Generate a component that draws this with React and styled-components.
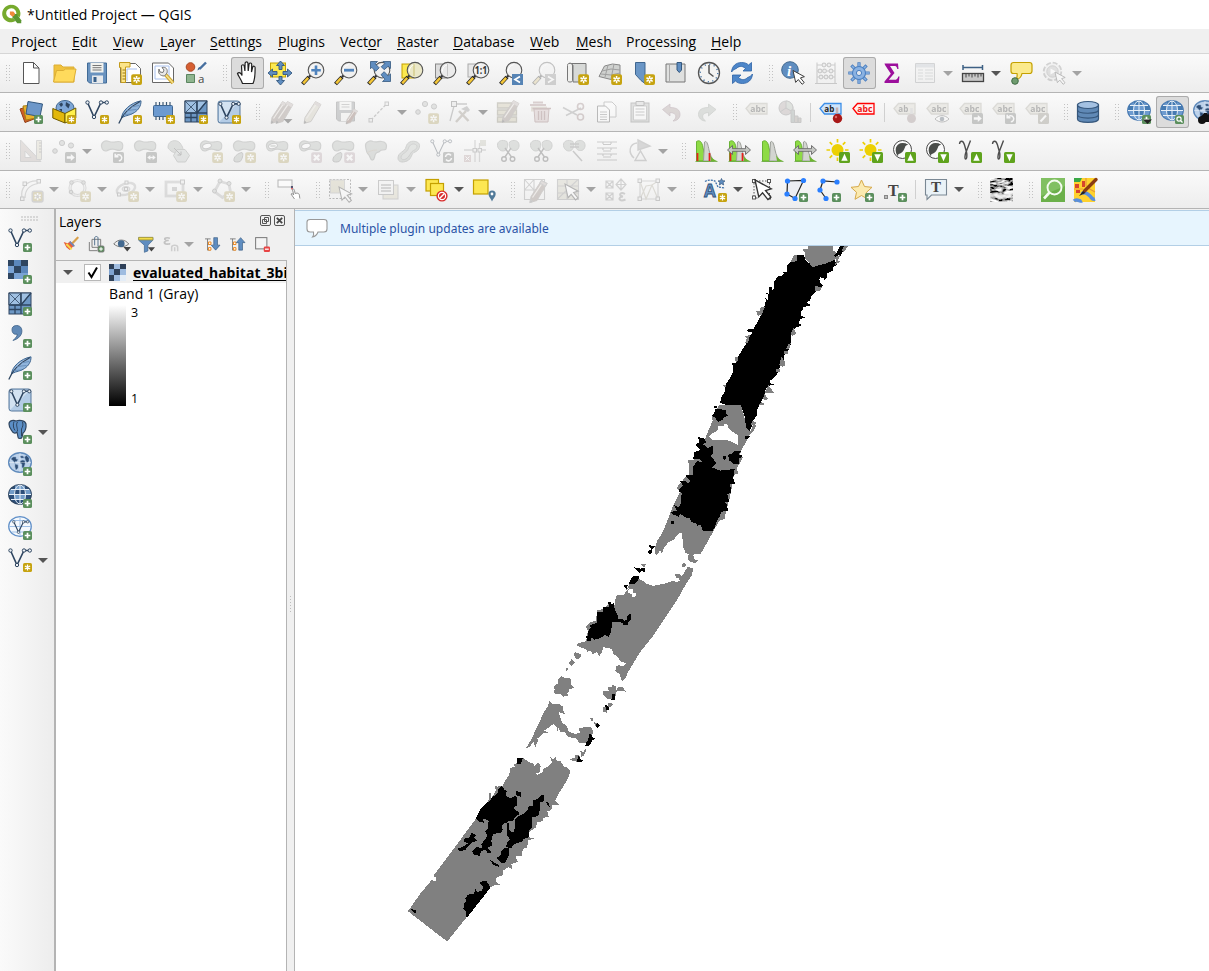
import React from "react";
import styled, { createGlobalStyle } from "styled-components";

const Global = createGlobalStyle`
  * { box-sizing: border-box; }
  html, body { margin: 0; background: #f0f0f0; overflow: hidden; }
`;

const Window = styled.div`
  width: 1209px;
  height: 971px;
  display: flex;
  flex-direction: column;
  overflow: hidden;
  background: #f0f0f0;
  color: #000;
  font-family: "Open Sans", "Noto Sans", sans-serif;
`;

const TitleBar = styled.header`
  height: 29px;
  flex: none;
  display: flex;
  align-items: center;
  gap: 4px;
  padding-left: 2px;
  background: #fff;
  font-size: 14px;
  letter-spacing: 0.05px;
  white-space: nowrap;
`;

const MenuBar = styled.nav`
  height: 25px;
  flex: none;
  display: flex;
  align-items: center;
  padding: 2px 0 0 11px;
  border-bottom: 1px solid #d6d6d6;
`;

const MenuItem = styled.span`
  width: ${(p) => p.$w}px;
  flex: none;
  font-size: 14px;
  line-height: 22px;
  letter-spacing: 0;
  white-space: nowrap;
  u { text-underline-offset: 2px; text-decoration-thickness: 1px; text-decoration-skip-ink: none; }
`;

const Toolbar = styled.div`
  height: ${(p) => p.$h ?? 39}px;
  flex: none;
  display: flex;
  align-items: center;
  overflow: hidden;
  background: linear-gradient(#fafafa, #ededed);
  border-bottom: 1px solid #b4b4b4;
`;

const Grip = styled.div`
  width: ${(p) => (p.$first ? 15 : 18)}px;
  height: 18px;
  flex: none;
  padding-left: ${(p) => (p.$first ? 6 : 10)}px;
  &::before {
    content: "";
    display: block;
    width: 5px;
    height: 18px;
    background:
      repeating-linear-gradient(#f4f4f4 0 1px, transparent 1px 3px),
      linear-gradient(90deg, #c2c2c2 1px, transparent 1px 3px, #c2c2c2 3px 4px, transparent 4px);
    mask: repeating-linear-gradient(transparent 0 1px, #000 1px 2px, transparent 2px 3px);
  }
`;

const Separator = styled.div`
  width: 8px;
  height: 19px;
  flex: none;
  border-left: 1px solid #d0d0d0;
  transform: translateX(3px);
`;

const ToolButton = styled.button`
  width: 33px;
  height: 32px;
  flex: none;
  display: flex;
  align-items: center;
  justify-content: flex-start;
  padding: 0 0 0 4px;
  border: 0;
  background: ${(p) =>
    p.$active ? "linear-gradient(#dcdcdc, #dcdcdc) 0 0 / 32px 32px no-repeat" : "none"};
  box-shadow: ${(p) => (p.$active ? "inset 0 0 0 1px #ababab" : "none")};
  border-radius: 3px;
`;

const Glyph = styled.svg`
  width: ${(p) => p.$size ?? 24}px;
  height: ${(p) => p.$size ?? 24}px;
  flex: none;
  display: block;
  overflow: visible;
  filter: ${(p) => (p.$dim ? "saturate(0.45) opacity(0.33)" : "none")};
  font-family: "Open Sans", sans-serif;
`;

const Caret = styled.span`
  width: 15px;
  flex: none;
  display: flex;
  padding-left: 1px;
  &::before {
    content: "";
    border: 5px solid transparent;
    border-top-color: ${(p) => (p.$dim ? "#a3a3a3" : "#555")};
    border-bottom: 0;
  }
`;

const Workspace = styled.main`
  flex: 1;
  min-height: 0;
  display: flex;
`;

const SideBar = styled.aside`
  width: 54px;
  flex: none;
  display: flex;
  flex-direction: column;
  padding-top: 7px;
  background: linear-gradient(90deg, #fafafa, #ededed);
`;

const SideGrip = styled.div`
  width: 17px;
  height: 5px;
  margin-left: 21px;
  background: radial-gradient(circle at 1px 1px, #b9b9b9 0.5px, transparent 0.9px) 0 0 / 3px 3px;
`;

const SideItem = styled.div`
  height: 32px;
  display: flex;
  align-items: center;
  padding-left: 8px;
  gap: 5px;
`;

const SideList = styled.div`
  padding-top: 3px;
`;

const LayersDock = styled.section`
  width: 233px;
  flex: none;
  display: flex;
  flex-direction: column;
  border-left: 2px solid #b4b4b4;
`;

const DockTitle = styled.div`
  height: 22px;
  flex: none;
  display: flex;
  align-items: center;
  padding: 0 2px 0 3px;
  font-size: 14px;
  letter-spacing: 0;
  span { flex: 1; padding-top: 2px; }
`;

const DockButton = styled(Glyph)`
  margin-left: 3px;
`;

const DockTools = styled.div`
  height: 29px;
  flex: none;
  display: flex;
  align-items: center;
  padding: 0 0 3px 7px;
`;

const DockTool = styled.div`
  width: ${(p) => p.$w ?? 25}px;
  flex: none;
`;

const LayerTree = styled.div`
  flex: 1;
  width: 231px;
  background: #fff;
  border-top: 1px solid #b4b4b4;
  border-right: 1px solid #b4b4b4;
`;

const LayerRow = styled.div`
  height: 22px;
  display: flex;
  align-items: center;
  background: #f0f0f0;
  overflow: hidden;
  padding-left: 6px;
`;

const CheckBox = styled.span`
  width: 17px;
  height: 17px;
  flex: none;
  margin: 0 8px 0 7px;
  background: #fff;
  border: 1px solid #b8b8b8;
`;

const LayerName = styled.span`
  margin-left: 7px;
  font-family: "Noto Sans", sans-serif;
  font-weight: 700;
  font-size: 14px;
  letter-spacing: 0.08px;
  white-space: nowrap;
  text-decoration: underline;
  text-underline-offset: 2px;
  text-decoration-thickness: 1px;
  text-decoration-skip-ink: none;
`;

const BandLabel = styled.div`
  height: 22px;
  padding-left: 53px;
  line-height: 21px;
  font-size: 14px;
  letter-spacing: 0.1px;
`;

const Legend = styled.div`
  display: flex;
  gap: 5px;
  padding-left: 53px;
`;

const Ramp = styled.div`
  width: 17px;
  height: 101px;
  background: linear-gradient(#fff, #000);
`;

const RampLabels = styled.div`
  height: 101px;
  display: flex;
  flex-direction: column;
  justify-content: space-between;
  font-size: 12.5px;
  line-height: 15px;
`;

const Splitter = styled.div`
  width: 8px;
  flex: none;
  display: flex;
  align-items: center;
  justify-content: center;
  border-right: 1px solid #b4b4b4;
  &::before {
    content: "";
    width: 2px;
    height: 18px;
    margin-top: 30px;
    background: linear-gradient(#bdbdbd 1px, transparent 1px) 0 0 / 1px 3px no-repeat repeat;
    background-repeat: repeat-y;
  }
`;

const CanvasPane = styled.section`
  flex: 1;
  min-width: 0;
  display: flex;
  flex-direction: column;
  padding-top: 1px;
`;

const MessageBar = styled.div`
  height: 36px;
  flex: none;
  display: flex;
  align-items: center;
  gap: 12px;
  padding-left: 11px;
  background: #e7f5fe;
  border: 1px solid #b3cfe6;
  border-right: 0;
  border-left: 0;
  color: #2a52a5;
  font-family: "Noto Sans", sans-serif;
  font-size: 12px;
  letter-spacing: 0.02px;
`;

const MapCanvas = styled.svg`
  width: 914px;
  height: 725px;
  display: block;
  background: #fff;
`;

/* ---------- icon parts ---------- */
const B = "#6d97c4";
const N = "#2e4560";

const Badge = ({ c, big, children }) => (
  <g transform={big ? "translate(24 24) scale(1.2) translate(-24 -24)" : undefined}>
    <rect x="15" y="15" width="9" height="9" rx="1.6" fill={c} />
    {children}
  </g>
);
const Plus = () => (
  <Badge c="#5b8f5d"><path d="M19.5 16.7v5.6M16.7 19.5h5.6" stroke="#fff" strokeWidth="1.7" /></Badge>
);
const Star = ({ big }) => (
  <Badge c="#c6a310" big={big}>
    <path d="M19.5 16.4v6.2M16.9 18l5.2 3M22.1 18l-5.2 3" stroke="#fff" strokeWidth="1.3" />
    {big && <circle cx="19.5" cy="19.5" r=".8" fill="#c6a310" />}
  </Badge>
);
const Cross = () => (
  <Badge c="#c79aa8" big><path d="M17.3 17.3l4.4 4.4M21.7 17.3l-4.4 4.4" stroke="#fff" strokeWidth="1.9" /></Badge>
);
const GoBadge = () => (
  <g><rect x="13" y="13" width="11" height="11" rx="1.500" fill="#6b706b" /><path d="M14.800 17.200h4v-2.200l4 3.500-4 3.500v-2.200h-4z" fill="#fff" /></g>
);
const TurnBadge = () => (
  <g><rect x="13" y="13" width="11" height="11" rx="1.500" fill="#6b706b" /><path d="M16.200 17.200a3 3 0 1 1 2.600 4.600M15.200 14.800v3h3.200" stroke="#fff" strokeWidth="1.500" fill="none" /></g>
);
const UpDown = ({ up }) => (
  <g>
    <rect x="13" y="13" width="11" height="11" rx="1.500" fill="#5fa31d" />
    <path d={up ? "M18.500 14.800l3.200 7h-6.400z" : "M18.500 22.200l3.200-7h-6.400z"} fill="#fff" />
  </g>
);
const Lens = ({ fill = "#f0f0f0", stroke = "#555", children }) => (
  <g>
    <path d="M9.500 14.500L8 16" stroke="#333" strokeWidth="2.400" />
    <path d="M8 16l-6.500 7" stroke="#222" strokeWidth="4" />
    <path d="M7.200 16.900L2.200 22.400" stroke="#f5c738" strokeWidth="2.500" />
    <circle cx="15" cy="9.200" r="7.800" fill={fill} stroke={stroke} strokeWidth="1.100" />
    <path d="M9.500 10.500a6 6 0 0 1 5-6.800" stroke="#fff" fill="none" />
    {children}
  </g>
);
const VNodes = ({ w = 1.3 }) => (
  <g fill="#eef2f6" stroke={N} strokeWidth={w}>
    <path d="M2.500 2.500L9 17l7-14.500h5.500" fill="none" strokeWidth={w + 0.3} />
    <circle cx="2.500" cy="2.500" r="1.700" strokeWidth="1" />
    <circle cx="9" cy="17" r="1.700" strokeWidth="1" />
    <circle cx="16" cy="2.500" r="1.700" strokeWidth="1" />
    <circle cx="21.800" cy="2.500" r="1.700" strokeWidth="1" />
  </g>
);
const Feather = () => (
  <g>
    <path d="M3.500 18C4 11 12 3 23 .8c.2 5-2.500 9-6.500 11.700S8 15.500 5 17z" fill="#8fb4dc" stroke="#3f6690" />
    <path d="M6 14C9 8 15 4 21 2.500c-4 3-10 7-15 11.500z" fill="#c3d8ee" />
    <path d="M.8 23.500C4 15 10 8 22 1.500" stroke={N} strokeWidth="1.200" fill="none" />
    <path d="M9 10.500l9.500-1M6 14.500l8-.5M13 7l8-1.500" stroke="#5f87b3" strokeWidth=".8" />
  </g>
);
const MeshSquare = () => (
  <g stroke={N} strokeWidth="1">
    <rect x="1" y="1" width="22" height="21" fill={B} />
    <path d="M1 1h12v12H1z" fill="#9fc0e2" />
    <path d="M13 1h10L13 13z" fill="#9fc0e2" />
    <path d="M1 1l12 12M13 1L1 13" fill="none" strokeWidth=".8" />
    <path d="M13 13L23 1M1 13h22M13 1v21M7 13v9M1 17.500h12" fill="none" strokeWidth="1.300" />
  </g>
);
const Globe = ({ dark }) => (
  <g>
    <ellipse cx="12" cy="10.500" rx="11.300" ry="9.800" fill={dark ? "#2c4f7a" : "#6d9bcf"} stroke={dark ? N : "#4d7db3"} strokeWidth="1.200" />
    <path d="M2 5.500h4.500v5H1zM17.500 5.500H22l1 5h-5.500zM6.500 10.500h11v5h-11zM7 1.500h10v4H7z" fill={dark ? "#7fa9d6" : "#3f75ad"} opacity=".85" />
    <path d="M12 1v19M1 10.500h22M3 5.500h18M3 15.500h18" stroke="#e8f0f8" strokeWidth="1" />
    <ellipse cx="12" cy="10.500" rx="5.500" ry="9.500" fill="none" stroke="#e8f0f8" />
  </g>
);
const WorldMap = () => (
  <g>
    <ellipse cx="12" cy="10.500" rx="11.300" ry="9.800" fill="#bdd2ea" stroke="#5f8abb" strokeWidth="1.400" />
    <path d="M3 7l2-2h3v2l2 .5-1.500 2H7v2L5.500 9zM7 12l3 1v3l-2 2-1-3zM12 4h3l1 2h-3zM12 9l3-1 2 1v3l-1.500 4-1.500-.5V12l-2-1zM16.500 5l2-1.500L21 6v3l-2 2-1.500-3z" fill="#2f4e74" stroke="#7f9fc4" strokeWidth=".5" />
    <path d="M1 10.500h22M12 1v19" stroke="#fff" strokeWidth=".6" opacity=".6" />
  </g>
);
const Blob = ({ inner }) => (
  <g>
    <path d="M1.500 7.500C1 3 5 1 9 2.500c3.500 1.300 5 .5 9 0 4-.3 5.500 2.500 4.500 6.500-1 3.500-4 2.500-7.500 1.500-4-1-5.500 0-8 1.200C4.500 12.700 2 11 1.500 7.500z" fill="#a8b3a8" stroke="#858b85" strokeWidth="1.200" />
    {inner && <ellipse cx="8" cy="7" rx="4.500" ry="2.500" fill="#fff" stroke="#777" transform="rotate(-15 8 7)" />}
  </g>
);
const LowBlob = () => (
  <path d="M2 22c-1-4 4-8 8-8.500 2 1 0 8-2 9-2.500.8-5 .7-6-.5z" fill="#a8b3a8" stroke="#777" />
);
const Pencil = ({ c = "#9a7868" }) => (
  <g>
    <path d="M4 17.500L14.500 1.500l5.500 3L10 21.500 3 23.500z" fill={c} stroke="#8a7c70" strokeWidth=".9" />
    <path d="M5.500 18.500L16 3" stroke="#e8dccb" strokeWidth="1.300" />
    <path d="M14.500 1.500l5.500 3-1.700 2.700-5.500-3.100z" fill="#c0a8a0" />
    <path d="M3 23.500l.5-3 2.200 2z" fill="#444" />
  </g>
);
const Scissors = () => (
  <g fill="none" stroke="#555" strokeWidth="1.400">
    <path d="M9 9l6.500 9M15 9L9 18" />
    <circle cx="8" cy="20" r="2.300" /><circle cx="16.500" cy="20" r="2.300" />
  </g>
);
const LobePair = () => (
  <g fill="#a8b3a8" stroke="#858b85">
    <path d="M11 2.500C6 0 1 2 1.500 6.500S6 13 9 11.500s3-6 2-9zM13.500 3c4-3 9-1.500 9.500 2.500s-2 6.500-5.500 6-5-4.500-4-8.500z" />
  </g>
);
const Tag = ({ text = "abc", fill = "#d9d3b8", stroke = "#aaa48a", color = "#333" }) => (
  <g>
    <path d="M1 8.500L5.500 3.500H22v10.500H5.500z" fill={fill} stroke={stroke} strokeWidth="1.300" />
    <text x="5.300" y="12" fontSize="9.500" fontWeight="700" fill={color} textLength={text.length * 5} lengthAdjust="spacingAndGlyphs">{text}</text>
  </g>
);
const Histogram = ({ red, arrows }) => (
  <g>
    <path d="M2.500 22V2.500c3-2 5.500 0 6.500 6 1 5 2 9 5 13.500z" fill="#8edb45" stroke="#53a51b" strokeWidth=".8" />
    <path d="M9.500 22L10.500 3c2-2 3.500 2 4.500 8 1 5 3 8.500 5 11z" fill="#d3d5d1" stroke="#9b9e98" strokeWidth="1" />
    <path d="M16 16c1.500 3 4 5 7 6h-6z" fill="#6db52e" />
    {red && <path d="M3.500 14v8M15.500 14v8" stroke="#e8201c" strokeWidth="1.700" />}
    <path d="M1.500 22.500h22" stroke="#62a635" strokeWidth=".8" />
    {arrows && (
      <path d="M.5 11l5-4.500v3.200h13V6.500l5 4.500-5 4.500v-3.200h-13v3.200z" fill="#c6c8c4" stroke="#666" strokeWidth=".9" />
    )}
  </g>
);
const Sun = () => (
  <g>
    <circle cx="11.500" cy="11" r="6" fill="#ecd003" />
    <path d="M11.500 0v3.500M11.500 18.500V22M.5 11H4M19 11h3.500M3.700 3.200l2.500 2.500M19.300 3.200l-2.500 2.500M3.700 18.800l2.500-2.500" stroke="#ecd003" strokeWidth="1.700" />
  </g>
);
const Contrast = () => (
  <g>
    <circle cx="10.500" cy="10.500" r="9" fill="#fafafa" stroke="#4a4a4a" />
    <path d="M16.200 5.500C9 8.500 6.500 12 6 17.500A8 8 0 0 1 16.200 5.500z" fill="#4a4d4a" />
    <path d="M14 4.500c-1 6-3.500 10-9 11C1.500 10 5 1.500 14 4.500z" fill="#4a4d4a" />
  </g>
);
const Gamma = () => (
  <path d="M1.500 5C2 1.500 5 1 6.500 6l1.800 6.500L12.500 1.500M8.300 12C6.800 16 6.500 20 7.700 20s1.600-4 .6-8" fill="none" stroke="#4d4d4d" strokeWidth="1.400" />
);
const Cursor = ({ x = 11, y = 9, s = 1 }) => (
  <path transform={`translate(${x} ${y}) scale(${s})`} d="M0 0l2.800 12.500 2.800-3 4 5 2.200-1.800-4-4.900 4.200-1.300z" fill="#fff" stroke="#333" strokeWidth="1" />
);
const Nodes = ({ pts, close }) => (
  <g>
    <path d={"M" + pts.map((p) => p.join(" ")).join("L") + (close ? "z" : "")} fill={close ? "#ecedf2" : "none"} stroke="#222" strokeWidth="1.200" />
    {pts.map(([x, y]) => <circle key={x + "_" + y} cx={x} cy={y} r="2.600" fill="#2a7fff" />)}
  </g>
);
const Dot = ({ x, y, r = 2.3 }) => <circle cx={x} cy={y} r={r} fill="#b4b9b4" stroke="#777" />;
const DotCloud = () => <g><Dot x={3} y={12} /><Dot x={10} y={4} r={2.6} /><Dot x={19} y={6.5} r={2.6} /></g>;
const Sq = ({ x, y, s = 3.5 }) => <rect x={x} y={y} width={s} height={s} fill="#e4e4e4" stroke="#777" strokeWidth="1" />;

const icons = {
  file: <path d="M4.500 1.500h10l5.500 5.500v15.500H4.500zM14.500 1.500V7H20" fill="#fff" stroke="#555" />,
  folder: <g><path d="M2 4h7l2 2h11V21H2z" fill="#f0c23e" stroke="#dcae35" /><path d="M4.500 9.500h7l2-1.500H24L21.500 21H1.500z" fill="#ffda5c" stroke="#dcae35" /></g>,
  save: <g><path d="M2.500 2h19v20h-17L2.500 20z" fill="#6a93bf" stroke="#416b96" /><path d="M5.500 2h13v9.500h-13z" fill="#f2f2ee" /><path d="M7.500 4.500h9M7.500 6.700h9M7.500 9h9" stroke="#777" /><path d="M7 14.500h11V22H7z" fill="#e6e9ec" /><path d="M8.500 16h3v5h-3z" fill="#39608a" /></g>,
  layout: <g><path d="M2.500 2.500h15l5 5v14h-20z" fill="#fff" stroke="#666" /><path d="M9 8h10M9 8v12" stroke="#a8c0ee" fill="none" /><path d="M1.500 1.500H12v4.500H7.500v15.500H3V6.500H1.500z" fill="#fbe48a" stroke="#c39b1c" /><path d="M4.500 9h3M4.500 12h3M4.500 15h3M4.500 18h3" stroke="#9c7a14" /><Star big /></g>,
  layoutManager: <g><path d="M1.500 2h16l5 5v14.500h-21z" fill="#fff" stroke="#666" /><path d="M4 5h14v13H4z" fill="none" stroke="#a8c0ee" /><path d="M14 13l8 9" stroke="#caa22a" strokeWidth="3.600" /><path d="M14 13l8 9" stroke="#f7df86" strokeWidth="1.800" /><path d="M8 8l1 3 3 .5 1-2.500-2-2.500c4-1 6 2 5 5.500l-2.500 3C9 15 6.500 12 8 8z" fill="#e8e8e8" stroke="#777" /></g>,
  style: <g><circle cx="6.500" cy="6" r="4.300" fill="#d65f32" stroke="#a94a26" /><path d="M2.500 13.500h8v8h-8z" fill="#8fb58f" stroke="#5b8560" /><path d="M13.500 9.500c.2-3 2-4 3.500-3.500l-1 2z" fill="#3b6290" /><path d="M15.500 8L22 1.500" stroke="#466f9f" strokeWidth="2.400" fill="none" /><text x="14" y="21.500" fontSize="11.500" fill="#444">a</text></g>,
  hand: <path d="M7.500 22.500C6 18 3.500 15.500 2.500 12.500c1.500-1.800 3.500-.5 4.500 2L6.500 5c.5-1.800 2.500-1.500 2.700 0l.7 5 .2-8c.5-1.600 2.600-1.500 2.800 0l.3 8 .9-7c.5-1.500 2.500-1.200 2.600.3L16.500 11l1.200-5c.7-1.300 2.400-.9 2.400.6 0 6 .2 11-2.100 15.900z" fill="#fff" stroke="#222" strokeWidth="1.200" />,
  panSelection: <g><rect x="2.500" y="2" width="15" height="14" fill="#fce94f" stroke="#c4a000" /><path d="M12.500 0l4 4.500h-2.500v4h-3v-4H8.500zM12.500 24l-4-4.500H11v-4h3v4h2.500zM0 12l4.500-4v2.500H9v3H4.500V16zM24 12l-4.500 4v-2.500H15v-3h4.500V8z" fill="#5f8dc0" stroke="#33587f" strokeWidth=".9" /></g>,
  zoomIn: <Lens><path d="M15 4.500v9.500M10.300 9.200h9.500" stroke="#4f83bd" strokeWidth="2.600" /></Lens>,
  zoomOut: <Lens><path d="M10 9.200h10" stroke="#4f83bd" strokeWidth="2.800" /></Lens>,
  zoomFull: <g><Lens /><path d="M3.500.5h7L8.200 2.800l4 4-3.500 3.500-4-4-1.200 1.500zM23.500.5v7l-2.300-2.300-4 3.500-3-3L18 2.500 16 .5zM23.500 20.500h-8l2.500-2.300-4-4.500 3.200-3 4 4.200 2.300-2z" fill="#5f8dc0" stroke="#33587f" strokeWidth=".8" /></g>,
  zoomSelection: <g><rect x="2" y="3" width="12" height="14" fill="#fce94f" stroke="#c4a000" /><Lens fill="#ebe8c8" /><path d="M14 3v12" stroke="#c9bf70" /></g>,
  zoomLayer: <g><rect x="2.500" y="3" width="12" height="14" fill="#ddd" stroke="#888" /><Lens fill="#ebebeb" /><path d="M14.500 3v12" stroke="#c8c8c8" /></g>,
  zoomNative: <g><rect x="2" y="3" width="12" height="13" fill="#e8e8e8" stroke="#aaa" /><Lens><text x="8.800" y="13" fontSize="10.500" fontWeight="700" fill="#333" textLength="12.500" lengthAdjust="spacingAndGlyphs">1:1</text></Lens></g>,
  zoomLast: <g><Lens /><rect x="13" y="13" width="11" height="11" fill="#5684b5" /><path d="M21 15.500L16 18.500l5 3" stroke="#fff" strokeWidth="1.700" fill="none" /></g>,
  zoomNext: <g><Lens /><rect x="13" y="13" width="11" height="11" fill="#888" /><path d="M16 15.500l5 3-5 3" stroke="#fff" strokeWidth="1.700" fill="none" /></g>,
  newMap: <g><path d="M4 2.500h17V21H8V4.500C7 2 5 2 4 2.500z" fill="#d7d9d7" stroke="#777" /><path d="M2.500 4.500C2 1.500 8 1.500 7.500 5v14.500c0 2-5 2-5 0z" fill="#f0f0ee" stroke="#777" /><Star big /></g>,
  new3d: <g><path d="M1 15.500L6.500 5l8-2L22 4v11l-9 3.500z" fill="#cfd1cf" stroke="#888" /><path d="M4 10l9-2 9 1M10 4L7 16M16 3l-3 15M3 13l10 1 9-2" stroke="#a0a0a0" fill="none" /><Star big /></g>,
  bookmarkNew: <g><path d="M4.500 1.500h9.500v21l-4-3-5.500-6z" fill="#6a96c6" stroke="#3f6690" /><Star big /></g>,
  bookmarks: <g><path d="M2 3h19v18H2z" fill="#dfe0df" stroke="#777" /><path d="M5.500 3v18" stroke="#aaa" /><path d="M13 1.500h4.500V9l-2.200 2.500L13 9z" fill="#5f8dc0" stroke="#33587f" /></g>,
  clock: <g><circle cx="12" cy="12" r="10.500" fill="#f4f4f2" stroke="#555" strokeWidth="1.300" /><circle cx="12" cy="12" r="8.800" fill="none" stroke="#4b76a5" strokeWidth="1.400" strokeDasharray="1.200 3.400" /><path d="M12 4v8l4.500 3.500" fill="none" stroke="#555" strokeWidth="1.500" /></g>,
  refresh: <g fill="#4d86c9" stroke="#2c62a6" strokeWidth=".8"><path d="M1.500 11C2 5 6 1.500 11.500 1.500c3.500 0 5.500 1 7 2.500l3-2.500V10h-8.500l2.500-2.500C12 4 8 5.500 6.500 7.500 4.500 8 2.500 9.500 1.500 11zM22.500 13c-.5 6-4.500 9.500-10 9.500-3.500 0-5.500-1-7-2.500l-3 2.500V14H11l-2.500 2.500c3.500 3.500 7.500 2 9 0 2-.5 4-2 5-3.500z" /></g>,
  identify: <g><circle cx="9" cy="9" r="8.300" fill="#5f8dc0" stroke="#41688f" /><text x="6" y="14.500" fontSize="15" fontWeight="700" fontStyle="italic" fontFamily="Liberation Serif" fill="#fff">i</text><Cursor x={12} y={9.5} s={0.95} /></g>,
  abacus: <g fill="#ddd" stroke="#777" strokeWidth="1.100"><path d="M3 1.500V22M21 1.500V22M1 22.500h22M3 4h18M3 10h18M3 16h18" fill="none" /><circle cx="10" cy="4" r="1.900" /><circle cx="15" cy="4" r="1.900" /><circle cx="6" cy="10" r="1.900" /><circle cx="10.500" cy="10" r="1.900" /><circle cx="17" cy="10" r="1.900" /><circle cx="7" cy="16" r="1.900" /><circle cx="12" cy="16" r="1.900" /><circle cx="17" cy="16" r="1.900" /></g>,
  gear: <g><g stroke="#4a7fc0" strokeWidth="3.200"><path d="M12 1.300v21.400M1.300 12h21.400M4.400 4.400l15.200 15.200M19.600 4.400L4.400 19.600" /></g><g stroke="#8ab2e2" strokeWidth="1.500"><path d="M12 2v20M2 12h20M5 5l14 14M19 5L5 19" /></g><circle cx="12" cy="12" r="6.500" fill="#8ab2e2" stroke="#4a7fc0" strokeWidth="1.100" /><circle cx="12" cy="12" r="2.600" fill="#e4e8ee" stroke="#4a7fc0" /></g>,
  sigma: <path d="M4.500 2.500H18l.5 5.500h-1.200c-.5-2.500-1.300-3-3.500-3H10L14.500 12l-5.700 6.800h5.500c2.500 0 3.300-.7 4-3.300H19.500l-.8 6.500H4.500v-1.500l6.300-7.700L5 4z" fill="#9c0f9c" />,
  table: <g><path d="M2.500 2.500h19v19h-19z" fill="#eee" stroke="#8a9096" /><path d="M3 3h18v3.500H3z" fill="#b4c2d0" /><path d="M5 9h5M12 9h8M5 12h5M12 12h8M5 15h5M12 15h8M5 18h5M12 18h8" stroke="#9aa" strokeWidth="1.200" /></g>,
  ruler: <g><path d="M2 6.500h19.500M2 4v5M21.500 4v5" stroke="#3d6084" strokeWidth="1.500" /><rect x="1.500" y="12.500" width="21" height="8" fill="#c8c8c8" stroke="#444" strokeWidth="1.300" /><path d="M5 13v3.500M8 13v2.500M11 13v3.500M14 13v2.500M17 13v3.500M20 13v2.500" stroke="#444" /></g>,
  tip: <g><path d="M4.500 1.500h16c2 0 2.500 1 2.500 2.500v6c0 2-1 2.500-2.500 2.500h-7.500c-.5 3-3 5.500-6 6.500 1-2 1.500-4 1-6.500H4.500C2.500 12.500 2 11.500 2 10V4c0-1.500 1-2.500 2.500-2.500z" fill="#fbea8c" stroke="#c4a000" strokeWidth="1.200" /><circle cx="6" cy="20" r="3.300" fill="#6f9c6f" stroke="#3f6b45" /></g>,
  actions: <g><circle cx="10.500" cy="10.500" r="8.800" fill="#e6e6e6" stroke="#888" strokeWidth="1.800" strokeDasharray="5 1.900" /><circle cx="10.500" cy="10.500" r="5.700" fill="#b4b4b4" stroke="#888" /><path d="M8.500 7.500l5.500 3-5.500 3z" fill="#fff" /><Cursor x={13} y={11} s={0.85} /></g>,

  dataSource: <g><path d="M1 9l9-3 5 13-9 3.500z" fill="#cf5f28" stroke="#934117" /><path d="M4 6l11-1 2 13-10 2z" fill="#e9b32c" stroke="#a97e10" /><path d="M9 1.500L23.500 4 21 16.500 7 14z" fill="#6d97c9" stroke="#33587f" /><Plus /></g>,
  geopackage: <g><ellipse cx="13" cy="8" rx="9" ry="7.500" fill="#7da6d6" stroke="#3f6690" /><path d="M7 4l3-1.500 1 2.500-2 2zM14 2l4 2.500-1.500 4-3-3zM7 9l3 0 0 3z" fill={N} /><path d="M.8 8.500L13 13.500v9.500L.8 18z" fill="#e2b80c" stroke="#6e5a00" /><path d="M13 13.500L23.800 8v10L13 23z" fill="#fff04c" stroke="#6e5a00" /><Star /></g>,
  shapefile: <g><VNodes /><Star /></g>,
  spatialite: <g><Feather /><Star /></g>,
  scratch: <g><path d="M5 2v18M8.500 2v18M12 2v18M15.500 2v18M19 2v18" stroke="#3f5a75" strokeWidth="1.200" /><rect x="2.500" y="5.500" width="19" height="11" rx="1" fill="#6c9ad0" stroke="#3f6690" /><Star /></g>,
  meshNew: <g><MeshSquare /><Star /></g>,
  virtualNew: <g><rect x="1" y="1" width="22" height="22" rx="2.500" fill="#b4cce6" stroke="#56789c" /><path d="M2 2h20L2 22z" fill="#dbe7f4" opacity=".8" /><g transform="translate(1 1.500) scale(.95)"><VNodes /></g><Star /></g>,
  pencils: <g><Pencil /><g transform="translate(5 0)"><Pencil /></g><path d="M15.500 19h9l-4.500 4.500z" fill="#111" /></g>,
  pencil: <Pencil c="#cfc49a" />,
  saveEdits: <g><path d="M2.500 2h18v19h-16l-2-2z" fill="#7e868c" stroke="#666" /><path d="M5.500 2h12v8h-12zM7 13h10v8H7z" fill="#f2f2ee" /><path d="M7.500 4.500h8M7.500 7h8" stroke="#888" /><g transform="translate(10 8) scale(.68)"><Pencil c="#a0523c" /></g></g>,
  segment: <g><path d="M4 20L20 3.500" stroke="#777" strokeWidth="1.300" strokeDasharray="3 1.500" /><Sq x={2} y={18.5} /><Sq x={18} y={2} /></g>,
  points: <g><DotCloud /><Star big /></g>,
  vertexTool: <g><path d="M2 21L6 6M8 4h11" stroke="#777" strokeWidth="1.300" /><rect x="3.500" y="1.500" width="5" height="5" fill="#ddd" stroke="#555" /><path d="M8 22L18 11M11 11l9.500 10" stroke="#98876d" strokeWidth="2.500" /><path d="M13 9l6-3 3 4-2 2z" fill="#888" /></g>,
  multiEdit: <g><path d="M1.500 3h19v5h-19zM1.500 10h19v5h-19zM1.500 17h19v5h-19z" fill="#cdbf7a" stroke="#887e50" strokeWidth="1.300" /><g transform="translate(3 -1)"><Pencil /></g></g>,
  trash: <g><path d="M1 5h16M4 2.500h10" stroke="#b77" strokeWidth="2" /><path d="M2 6.500h16v5H2z" fill="#cfb58c" /><path d="M5 9h15l-1 13H6z" fill="#e0b0b0" stroke="#a55" /><path d="M3.500 8.500h18.500M9.500 11v9M12.500 11v9M15.500 11v9" stroke="#a55" strokeWidth="1.300" /></g>,
  cut: <g fill="none" stroke="#888" strokeWidth="1.600"><path d="M1 7.500L15 15M4 15.500L19 8" /><circle cx="18.500" cy="6.500" r="3" stroke="#a77" /><circle cx="18.500" cy="17" r="3" stroke="#a77" /></g>,
  copy: <g fill="#fff" stroke="#777"><path d="M9 2h8l4 4v11H9z" /><path d="M2.500 6h8l4 4v12h-12z" stroke="#444" /><path d="M5 12h7M5 14.500h7M5 17h7M5 19.500h7" stroke="#777" /></g>,
  paste: <g><rect x="3" y="3" width="18" height="19" fill="#b0b5b0" stroke="#666" /><path d="M5.500 6h13v14h-13z" fill="#fff" stroke="#888" /><path d="M8 1.500h8v4H8z" fill="#ccc" stroke="#555" /><path d="M7.500 9h9M7.500 12h9M7.500 15h9" stroke="#777" /></g>,
  undo: <path d="M1.500 9.500L9 4v3.500c7 0 10 2.500 10 7 0 3.500-3 6.500-7 6.500 4-3 4.500-8-3-8.500V16z" fill="#b8948f" stroke="#957" strokeWidth=".7" />,
  redo: <path d="M22 9.500L14.500 4v3.500c-7 0-10 2.500-10 7 0 3.500 3 6.500 7 6.500-4-3-4.500-8 3-8.500V16z" fill="#a5b3a5" stroke="#7a8a7a" strokeWidth=".7" />,
  label: <Tag />,
  diagram: <g><circle cx="8" cy="8" r="7" fill="#b99a9a" stroke="#777" /><path d="M8 8V1a7 7 0 0 1 6 10.500zM8 8l-6 4" fill="#a9bba5" stroke="#777" /><path d="M13 10h3.500v12.500H13z" fill="#7f9a90" stroke="#777" /><path d="M16.500 16H20v6.500h-3.500zM20 18h3v4.500h-3z" fill="#a99080" stroke="#777" /></g>,
  labelPin: <g><Tag text="ab" fill="#cfe4fb" stroke="#3d8fe8" color="#222" /><circle cx="18.500" cy="18.500" r="4.700" fill="#a81717" /><path d="M18 7.500v6" stroke="#c4b0b0" strokeWidth="2.600" /><circle cx="17" cy="17" r="1.200" fill="#d66" /></g>,
  labelUnplaced: <Tag fill="#fff1f0" stroke="#f00" color="#e11" />,
  labelPinDim: <g><Tag text="ab" /><circle cx="18.500" cy="18.500" r="4.500" fill="#a88080" /><path d="M18.500 8v6" stroke="#bbb" strokeWidth="2.600" /></g>,
  labelShow: <g><Tag /><path d="M9 19c4-4.500 10-4.500 14 0-4 4-10 4-14 0z" fill="#fff" stroke="#555" /><circle cx="16" cy="19" r="2.300" fill="#3a5a7a" /></g>,
  labelMove: <g><Tag /><GoBadge /></g>,
  labelRotate: <g><Tag /><TurnBadge /></g>,
  labelEdit: <g><Tag /><rect x="13" y="13" width="11" height="11" rx="1.500" fill="#8e866a" /><path d="M15.500 21.500l5.500-6" stroke="#fff" strokeWidth="2" /></g>,
  database: <g><path d="M1.500 5v14c0 4.500 21 4.500 21 0V5z" fill="#6089b6" stroke="#36577c" strokeWidth="1.200" /><ellipse cx="12" cy="5" rx="10.500" ry="3.500" fill="#a4c1e2" stroke="#36577c" strokeWidth="1.200" /><path d="M1.500 10c0 4.300 21 4.300 21 0M1.500 14.800c0 4.300 21 4.300 21 0" fill="none" stroke="#36577c" strokeWidth="1.200" /></g>,
  globeNew: <g><Globe /><Plus /><path d="M16 19.500h9l-4.500 4.500z" fill="#222" /></g>,
  globeZoom: <g><Globe /><Badge c="#5b8f5d"><circle cx="19" cy="19" r="2.100" fill="none" stroke="#fff" strokeWidth="1.200" /><path d="M20.500 20.500l2 2" stroke="#fff" strokeWidth="1.300" /></Badge></g>,
  globeFind: <g><WorldMap /><path d="M7 18l4-5h3l1 2 1-2h4l5 7v2H7z" fill="#111" /><circle cx="9" cy="20" r="4" fill="#111" /></g>,

  angle: <g stroke="#999"><path d="M1.500 1v21.500H22z" fill="#c8b0a4" /><path d="M6 12v6.500h6z" fill="#fff" /><path d="M17.500 1.500h5v19h-5z" fill="#ddd3a8" /><path d="M20 4h2.500M20 7h2.500M20 10h2.500M20 13h2.500" stroke="#777" /></g>,
  moveFeature: <g><DotCloud /><GoBadge /></g>,
  rotate: <g><Blob /><TurnBadge /></g>,
  scale: <g><Blob /><rect x="13" y="13" width="11" height="11" rx="1.500" fill="#6b706b" /><path d="M14.300 18.500l3-2.500v1.700h2.400V16l3 2.500-3 2.500v-1.700h-2.400V21z" fill="#fff" /></g>,
  simplify: <g fill="#a8b3a8" stroke="#858b85"><path d="M2 8c0-7 9-8 12-4s4 7 2 9-9 1-11-1-3-2-3-4z" /><path d="M11 10.500h8l4.500 6-4 6.500h-8l-4-6.500z" fill="#bac6c2" /><path d="M8 9l7 7M15 12.500V16h-3.500" stroke="#555" fill="none" /></g>,
  addRing: <g><Blob inner /><Star big /></g>,
  addPart: <g><Blob /><LowBlob /><Star big /></g>,
  fillRing: <g><Blob inner /><ellipse cx="8" cy="7" rx="3" ry="1.300" fill="#a8b3a8" /><Star big /></g>,
  deleteRing: <g><Blob inner /><Cross /></g>,
  deletePart: <g><Blob /><LowBlob /><Cross /></g>,
  reshape: <g><path d="M1.500 7C1 3 6 1 9 2.500c4 1 5-.500 9 0 4 .3 5.500 4 4 7.500-1 2-5 0-6 2s-3 0-4.500 3-.5 5.500-3 6-2-4-4-5.500S2 11 1.500 7z" fill="#a8b3a8" stroke="#858b85" strokeWidth="1.200" /><path d="M3 14c3-2 5-3 10-3" stroke="#b59a70" fill="none" /></g>,
  offset: <g fill="#a8b3a8" stroke="#858b85"><path d="M1 19c0-6 7-6 8-11s6-7 11-5 2 9-2 10-3 7-8 9-9 1-9-3z" /><path d="M4 18c1-4 6-4 7.500-9 1-3 4-5 7-3.500s1 5-2 6-4 7-7.500 8.500-5 0-5-2z" fill="#bcc5bc" /></g>,
  splitFeatures: <g><g transform="scale(.92)"><VNodes w={0.8} /></g><rect x="13" y="13" width="11" height="11" rx="1.500" fill="#6b706b" /><path d="M15.500 18a3 3 0 0 1 5.500-1.500M21.500 19a3 3 0 0 1-5.500 1.500" stroke="#fff" strokeWidth="1.500" fill="none" /></g>,
  splitParts: <g><path d="M1 11h22M12 1v22M16.500 4v19" stroke="#a0a0a0" strokeWidth="1.300" fill="none" /><Sq x={10} y={9.500} /><Sq x={15} y={9.500} /><rect x="1" y="16" width="7" height="7" fill="#c99" /><path d="M2.500 17.500l4 4M6.500 17.500l-4 4" stroke="#fff" /><rect x="17" y="1" width="6" height="6" fill="#bb9" /></g>,
  cutLobes: <g><LobePair /><Scissors /></g>,
  mergeLobes: <g><LobePair /><path d="M8 5h9M8 8h9" stroke="#777" strokeWidth="1.300" /><path d="M11 12l9 10" stroke="#777" strokeWidth="1.500" /></g>,
  align: <g stroke="#777" strokeWidth="1.200" fill="none"><path d="M2 3h20M2 9h20M2 15h20M2 21h20M8 5.500h8M8 12h8M8 18h8M8 3v2M16 3v2M8 9v2M16 9v2M8 15v2M16 15v2" /></g>,
  rotateSymbols: <g fill="none" stroke="#888" strokeWidth="1.400"><path d="M6 19C0 14 1 5 9 4" /><path d="M10 1l12 6-12 4z" fill="#999" /><path d="M7 21.500h11L12.500 12z" /></g>,
  stretchLocal: <Histogram red />,
  stretchFull: <Histogram red arrows />,
  cumulLocal: <Histogram />,
  cumulFull: <Histogram arrows />,
  brighter: <g><Sun /><UpDown up /></g>,
  darker: <g><Sun /><UpDown /></g>,
  contrastUp: <g><Contrast /><UpDown up /></g>,
  contrastDown: <g><Contrast /><UpDown /></g>,
  gammaUp: <g><Gamma /><UpDown up /></g>,
  gammaDown: <g><Gamma /><UpDown /></g>,

  curve: <g fill="none" stroke="#999" strokeWidth="1.200"><path d="M3 20C1 10 8 2 19 3M6 20c0-8 4-13 13-14.500" /><Sq x={1.500} y={19} /><Sq x={4} y={4} /><Sq x={18} y={1.500} /><Star big /></g>,
  circle: <g><circle cx="10.500" cy="10" r="7.500" fill="none" stroke="#aaa" strokeWidth="3.200" /><circle cx="10.500" cy="10" r="7.500" fill="none" stroke="#eee" /><Dot x={4.5} y={4.5} r={1.800} /><Dot x={16.5} y={4.5} r={1.800} /><Dot x={4} y={14} r={1.800} /><Star big /></g>,
  ellipse: <g><ellipse cx="11" cy="11" rx="9.500" ry="5.500" fill="none" stroke="#aaa" strokeWidth="2.500" transform="rotate(-20 11 11)" /><ellipse cx="11" cy="11" rx="4" ry="2.500" fill="#ccc" stroke="#999" /><Sq x={10} y={3} s={3} /><Sq x={9.500} y={9.500} s={3} /><Sq x={2.500} y={15} s={3} /><Star big /></g>,
  rectangle: <g><rect x="3" y="4" width="17" height="14" fill="none" stroke="#aaa" strokeWidth="2.800" /><rect x="9" y="9" width="5" height="4" fill="#999" /><Sq x={17.500} y={2} s={4} /><Star big /></g>,
  polygon: <g><path d="M9 3.500l9 2.500 1.500 8-8 5.500-8-6z" fill="none" stroke="#aaa" strokeWidth="2.800" /><Dot x={9} y={3} r={2} /><Dot x={18} y={5.500} r={2} /><Dot x={3.500} y={13} r={2} /><Star big /></g>,
  touch: <g><rect x="1" y="2" width="14" height="7" fill="#fafafa" stroke="#b5b5b5" /><path d="M15 10v1.500" stroke="#d55" strokeWidth="1.600" /><path d="M15 8v2" stroke="#446" strokeWidth="1.800" /><path d="M17.500 21l-3.500-5c1-1 2 0 2.700 1L15.500 11.500c1-1 2 0 2 1l.6 3c3-1 4.500 0 4.500 3.500l.3 1.500" fill="#fff" stroke="#888" strokeWidth=".9" /></g>,
  selectFeatures: <g><rect x="1.500" y="1.500" width="21" height="19" fill="none" stroke="#444" strokeDasharray="2 1.500" /><rect x="2.500" y="2" width="14" height="13" fill="#c9be7c" stroke="#999" /><Cursor x={11} y={9} s={1.050} /></g>,
  selectByValue: <g><rect x="7" y="7" width="15" height="14" fill="#d9cf98" stroke="#888" /><rect x="2.500" y="2.500" width="15" height="14" fill="#eee" stroke="#777" /><path d="M5 7h10M5 10h10M5 13h10" stroke="#777" strokeWidth="1.400" /></g>,
  deselect: <g fill="#fde752" stroke="#c4a000" strokeWidth="1.200"><rect x="2" y="1.500" width="12.500" height="11.500" /><rect x="6.500" y="5.500" width="13" height="12" /><circle cx="18" cy="18" r="5.600" fill="#d92b2b" stroke="none" /><circle cx="18" cy="18" r="3.600" fill="none" stroke="#fff" /><path d="M15.500 20.500l5-5" stroke="#fff" strokeWidth="1.500" /></g>,
  selectLocation: <g><rect x="1.500" y="2" width="14.500" height="14" fill="#fde752" stroke="#c4a000" strokeWidth="1.200" /><path d="M20 23.500c-1-3-3.500-4.500-3.500-7.500a3.600 3.600 0 0 1 7.200 0c0 3-2.700 4.500-3.700 7.500z" fill="#517a99" /><circle cx="20" cy="16" r="1.400" fill="#fff" /></g>,
  meshEdit: <g stroke="#888" fill="none" strokeWidth="1.100"><path d="M1.500 1.500h20v20h-20zM1.500 12h20M11 1.500v20M1.500 1.500l9.500 10.500M11 1.500L1.500 12" /><g transform="translate(4 1)"><Pencil /></g></g>,
  meshSelect: <g stroke="#888" fill="#ccc6a0" strokeWidth="1.100"><path d="M1.500 1.500h21v20h-21zM1.500 8h21M1.500 15h21M11 1.500v20M1.500 21L22 1.500" /><Cursor x={9} y={6} s={1.1} /></g>,
  meshTransform: <g fill="none" stroke="#888" strokeWidth="1.200"><path d="M2 3h7v7H2zM2 3l7 7M9 3l-7 7M2 15h7v7H2zM2 15l7 7M9 15l-7 7M17 1l5 5.500-5 5.500-5-5.500zM12 6.500h10M17 1v11" /><path d="M21 16c-5-3-7 2-2 2.500-6 .5-4 6 2.500 3" strokeWidth="2" /></g>,
  meshNodes: <g fill="none" stroke="#999" strokeWidth="1.200"><path d="M3 3h18v18H3z" /><path d="M3 3l6 18L15 7l6 14M3 21L9 8l6-1 6-4" stroke="#b0a884" /><Sq x={1} y={1} /><Sq x={19} y={1} /><Sq x={1} y={19} /><Sq x={19} y={19} /></g>,
  annotationLayer: <g><text x="1" y="19" fontSize="17" fontWeight="700" fill="#5f8dc0" stroke="#2f5279" strokeWidth=".8">A</text><path d="M2 3.500C5 1.500 9 2 12 3l3 6 7 1" fill="none" stroke="#3b6fa8" strokeDasharray="2 1" strokeWidth="1.300" /><path d="M18.500.5l1 2.200 2.500.2-1.900 1.600.6 2.500-2.200-1.300L16.300 7l.6-2.500L15 2.900l2.500-.2z" fill="#5f8dc0" stroke="#33587f" strokeWidth=".7" /><Star /></g>,
  annotationSelect: <g><path d="M3 5v13M18.500 5v4M5 3h12M5 20h3M18.500 15v3" stroke="#555" strokeDasharray="1.500 1.500" /><g fill="#fff" stroke="#555"><rect x="1.500" y="1.500" width="3" height="3" /><rect x="16.500" y="1.500" width="3" height="3" /><rect x="1.500" y="18" width="3" height="3" /><rect x="16.500" y="18" width="3" height="3" /></g><Cursor x={4} y={2} s={1.35} /></g>,
  annotationPolygon: <g><Nodes close pts={[[3.5, 3], [19.5, 2.5], [11, 20.5], [3, 16]]} /><Plus /></g>,
  annotationLine: <g><Nodes pts={[[20, 4], [6, 3], [3, 12], [9, 20.5]]} /><Plus /></g>,
  annotationMarker: <g><path d="M11.500 2l3 6.500 7.500.8-5.500 5 1.500 7-6.500-3.800L5 21.300l1.500-7-5.500-5 7.500-.8z" fill="#fbeab0" stroke="#d6a94a" /><Plus /></g>,
  annotationText: <g><rect x="1.500" y="17.500" width="3" height="3" fill="#bbb" stroke="#888" /><text x="5" y="18" fontSize="16" fontWeight="700" fontFamily="Liberation Serif" fill="#444">T</text><Plus /></g>,
  textBox: <g><path d="M1.500 1.500h21V17h-15L3 21.500V17H1.500z" fill="#eaf2f7" stroke="#7a8894" strokeWidth="1.100" /><text x="7" y="13.500" fontSize="15" fontWeight="700" fontFamily="Liberation Serif" fill="#444">T</text></g>,
  hillshade: (
    <g>
      <filter id="relief" x="0" y="0" width="1" height="1">
        <feTurbulence type="fractalNoise" baseFrequency="0.12 0.3" numOctaves="3" seed="4" />
        <feColorMatrix values="3.2 0 0 0 -1.1  3.2 0 0 0 -1.1  3.2 0 0 0 -1.1  0 0 0 0 1" />
      </filter>
      <rect width="23" height="24" fill="#888" filter="url(#relief)" />
      <path d="M0 15l7-1 6 2 10-3v4l-9 5-8-2-6 3z" fill="#eee" opacity=".7" />
    </g>
  ),
  searchPlugin: <g><rect width="24" height="24" fill="#6bb04a" /><path d="M0 0h24v8L0 18z" fill="#81c062" /><circle cx="13.500" cy="9.500" r="7" fill="none" stroke="#f4fbf0" strokeWidth="1.900" /><path d="M8.500 14.500L3 20.500" stroke="#f4fbf0" strokeWidth="2.600" /></g>,
  mapPlugin: <g><rect width="21" height="24" fill="#ffd22e" /><path d="M0 0h8l-2 4H0z" fill="#39a845" /><path d="M8 16c2-3 6 0 8 2s2 4 5 3M0 23c3-3 6 1 8 0" fill="none" stroke="#5a8fdc" strokeWidth="3.500" /><path d="M1 6h4v4H1zM8 3h3v6H8zM2 12h4v3H2z" fill="#d7442c" /><path d="M12 0v8M0 11h9M14 10l7 4" stroke="#e8973a" strokeWidth="1.200" /><path d="M10.500 13L22 1.500" stroke="#8a3c12" strokeWidth="3.400" strokeLinecap="round" /><path d="M5 18l4-5 2.500 2z" fill="#222" /></g>,

  addVector: <g><VNodes /><Plus /></g>,
  addRaster: <g><rect x="0" y="0" width="20" height="19" fill="#7aa3d4" /><path d="M0 0h6v6H0zM13 0h7v6h-7zM6 6h7v7H6zM0 13h6v6H0z" fill={N} /><path d="M6 0h7v6H6zM13 6h7v7h-7z" fill="#5b87bb" /><Plus /></g>,
  addMesh: <g><MeshSquare /><Plus /></g>,
  addDelimited: <g><path d="M4 5.500C4 1 10 .5 12.500 3c3 3.500 1.500 11-7.500 13.500 3-3 4.500-4.500 4-6.500C6 11 4 9 4 5.500z" fill="#6089b6" stroke="#3b5f87" strokeWidth=".8" /><Plus /></g>,
  addSpatialite: <g><Feather /><Plus /></g>,
  addVirtual: <g><rect x="1" y="1" width="22" height="22" rx="2.500" fill="#b4cce6" stroke="#56789c" /><path d="M2 2h20L2 22z" fill="#dbe7f4" opacity=".8" /><g transform="translate(1 1) scale(.93)"><VNodes /></g><Plus /></g>,
  addPostgis: <g><path d="M1 4c0-4 5-4 7-3 3-1 9-1 10 3 .5 4-1 8-3 9l-1 4c-.5 2-4 2-4 0l-1-5c-2 2-4 1-5-1C2 8 1 7 1 4z" fill="#5c8fc6" stroke={N} strokeWidth="1.200" /><path d="M6 1.500c-1 3-1 6 1 9M9.500 2c-2 3 0 5 0 9M14.500 2c1 3 0 5-1 7v7" stroke={N} fill="none" /><Plus /></g>,
  addWms: <g><WorldMap /><Plus /></g>,
  addWcs: <g><Globe dark /><Plus /></g>,
  addWfs: <g><ellipse cx="12" cy="10.500" rx="11.300" ry="9.800" fill="#f4f8fc" stroke="#5f8fc8" strokeWidth="1.200" /><path d="M1 10.500h22M4 4.500h16M4 16h16M12 1v19" stroke="#9fc0e6" /><g transform="translate(4 4) scale(.72)"><VNodes /></g><Plus /></g>,

  paint: <g><path d="M13 12L22 2.500" stroke="#d8a04c" strokeWidth="3.200" strokeLinecap="round" /><path d="M1 9l6 2 4-3 6 6-7 7-5-4z" fill="#e8603c" /><path d="M5 12l8 8" stroke="#f8d94a" strokeWidth="3" /><path d="M10 8.500l7 7" stroke="#6c87b8" strokeWidth="2.400" /></g>,
  addGroup: <g fill="none" stroke="#777" strokeWidth="1.400"><path d="M2 9v13h12M6 5v12h13V5z" /><path d="M10 14V3c0-3 5-3 5 0v12" stroke="#4a6a88" /><Plus /></g>,
  visibility: <g><path d="M1 12C6 5 16 5 21 12c-6 5-14 5-20 0z" fill="#eee" stroke="#777" strokeWidth="1.300" /><circle cx="11" cy="11.500" r="4.500" fill="#44698f" /><path d="M14 16h10l-5 6z" fill="#444" /></g>,
  filter: <g><path d="M1 2h20v4l-7 7v8l-5 2V13L1 6z" fill="#5f8dc0" stroke="#3f6690" /><path d="M1 2h20v3.500H1z" fill="#f2dd4a" stroke="#a89628" /><path d="M14 16h10l-5 6z" fill="#444" /></g>,
  expression: <g><text x="0" y="13" fontSize="21" fontWeight="700" fill="#666">ε</text><path d="M13 23v-6c0-4 9-4 9 0v6M17.500 17v6" fill="none" stroke="#888" strokeWidth="2.300" /></g>,
  expand: <g><path d="M0 3h9M4 3v18h5M4 12h5" stroke="#777" strokeWidth="1.400" fill="none" /><path d="M5.500 8h4v4h-4zM5.500 17h4v4h-4z" fill="#fff" stroke="#f28b1e" strokeWidth="1.600" /><path d="M14 1h6v12h4l-7 8-7-8h4z" fill="#5f8dc0" stroke="#33587f" /></g>,
  collapse: <g><path d="M0 3h9M4 3v18h5M4 12h5" stroke="#777" strokeWidth="1.400" fill="none" /><path d="M5.500 8h4v4h-4zM5.500 17h4v4h-4z" fill="#fff" stroke="#f28b1e" strokeWidth="1.600" /><path d="M14 21h6V9h4l-7-8-7 8h4z" fill="#5f8dc0" stroke="#33587f" /></g>,
  removeLayer: <g><rect x="1" y="1" width="18" height="18" fill="#f4f4f4" stroke="#777" strokeWidth="1.600" /><rect x="14" y="15" width="10" height="9" rx="2" fill="#e84545" /><path d="M16 19.500h6" stroke="#fff" strokeWidth="2" /></g>,
};

const Icon = ({ name, dim, size }) => (
  <Glyph viewBox="0 0 24 24" $dim={dim} $size={size}>{icons[name]}</Glyph>
);

/* "~" fades a tool, "!" marks it pressed; "|" grip, "/" separator, "v" and "~v" carets */
const toolbars = [
  "| file folder save layout layoutManager style | !hand panSelection zoomIn zoomOut zoomFull zoomSelection zoomLayer zoomNative zoomLast ~zoomNext newMap new3d bookmarkNew bookmarks clock refresh | identify ~abacus !gear sigma ~table ~v ruler v tip ~actions ~v",
  "| dataSource geopackage shapefile spatialite scratch meshNew virtualNew | ~pencils ~pencil ~saveEdits ~segment ~v ~points ~vertexTool ~v ~multiEdit ~trash ~cut ~copy ~paste ~undo ~redo | ~label ~diagram / labelPin labelUnplaced / ~labelPinDim ~labelShow ~labelMove ~labelRotate ~labelEdit | database | globeNew !globeZoom globeFind",
  "| ~angle ~moveFeature ~v ~rotate ~scale ~simplify ~addRing ~addPart ~fillRing ~deleteRing ~deletePart ~reshape ~offset ~splitFeatures ~splitParts ~cutLobes ~cutLobes ~mergeLobes ~align ~rotateSymbols ~v | stretchLocal stretchFull cumulLocal cumulFull brighter darker contrastUp contrastDown gammaUp gammaDown",
  "| ~curve ~v ~circle ~v ~ellipse ~v ~rectangle ~v ~polygon ~v | touch | ~selectFeatures ~v ~selectByValue ~v deselect v selectLocation | ~meshEdit ~meshSelect ~v ~meshTransform ~meshNodes ~v | annotationLayer v annotationSelect annotationPolygon annotationLine annotationMarker annotationText / textBox v | hillshade | searchPlugin mapPlugin",
];

const renderTool = (token, i) => {
  if (token === "|") return <Grip key={i} $first={i === 0} />;
  if (token === "/") return <Separator key={i} />;
  const dim = token[0] === "~";
  const active = token[0] === "!";
  const name = dim || active ? token.slice(1) : token;
  if (name === "v") return <Caret key={i} $dim={dim} />;
  return (
    <ToolButton key={i} $active={active}>
      <Icon name={name} dim={dim} />
    </ToolButton>
  );
};

const menus = [
  ["Pro", "j", "ect", 61], ["", "E", "dit", 41], ["", "V", "iew", 47], ["", "L", "ayer", 50],
  ["", "S", "ettings", 68], ["", "P", "lugins", 62], ["Vect", "o", "r", 57], ["", "R", "aster", 56],
  ["", "D", "atabase", 77], ["", "W", "eb", 46], ["", "M", "esh", 50], ["Pro", "c", "essing", 85], ["", "H", "elp", 40],
];

const sideTools = [
  ["addVector"], ["addRaster"], ["addMesh"], ["addDelimited"], ["addSpatialite"], ["addVirtual"],
  ["addPostgis", true], ["addWms"], ["addWcs"], ["addWfs"], ["shapefile", true],
];

/* Raster classes, traced per tile at three units to the pixel. */
const tiles = [
  {
    at: [660, 240],
    shapes: [
      ["g", "445,15 520,15 518,30 528,34 532,42 525,58 500,68 470,76 458,80 448,68 436,56 434,36 428,28 430,24 444,24"],
      ["k", "412,42 432,42 436,58 448,68 458,80 470,76 500,68 524,58 530,72 520,80 520,90 508,95 500,100 500,112 492,118 490,112 480,110 478,118 482,128 490,136 480,140 470,140 466,155 455,165 450,180 440,186 454,194 430,200 430,208 424,210 424,225 436,230 420,236 416,248 426,254 410,260 402,265 396,275 392,290 392,310 388,325 380,335 372,345 372,360 364,370 358,385 352,400 342,412 330,420 330,428 344,432 325,436 318,445 312,465 302,485 292,505 290,525 280,540 274,560 270,570 262,570 254,555 256,535 250,515 242,495 225,498 205,495 180,487 184,470 190,460 195,450 198,430 208,415 218,395 220,376 214,368 228,366 236,346 248,325 258,310 266,290 278,275 260,272 264,266 280,266 290,248 298,235 305,215 312,200 318,180 315,172 324,178 325,162 315,158 320,156 326,160 328,152 326,140 334,138 336,148 343,144 342,125 352,108 366,106 372,100 364,92 375,96 382,92 380,76 390,66 398,62 410,60"],
      ["g", "400,46 410,42 410,62 392,64"], ["g", "465,136 486,140 480,152 466,150"],
      ["g", "288,210 300,212 302,198 314,200 306,222 294,226"], ["g", "252,286 270,284 264,308 256,306 260,294"],
      ["g", "226,348 234,350 232,364 224,362"], ["g", "400,262 410,280 396,286 392,280"],
      ["g", "385,310 392,308 388,325 378,324"], ["g", "374,330 384,330 382,342 372,340"],
      ["g", "364,348 374,362 374,375 368,378 358,374"], ["g", "346,384 362,384 358,396 348,394"],
      ["g", "325,434 334,444 342,458 322,458 315,456"], ["g", "314,460 324,474 318,478 308,476"],
      ["g", "305,485 316,490 308,494 298,492"], ["g", "278,540 288,546 284,554 272,554"],
      ["g", "188,432 198,432 196,442"], ["k", "160,495 172,496 168,504 162,502"],
      ["k", "540,15 552,15 548,32 542,46 534,42 530,54 522,46 532,34"],
      ["g", "552,15 566,15 556,28 550,34 546,28"], ["g", "528,46 540,44 534,60 540,62 526,74"],
    ],
  },
  {
    at: [620, 400],
    shapes: [
      ["g", "298,12 330,14 362,12 372,44 380,84 392,92 400,68 408,76 400,92 390,100 385,112 378,124 366,146 360,160 368,170 358,190 350,205 355,220 342,222 330,290 318,330 314,355 298,360 280,392 262,425 242,460 218,462 212,465 196,456 190,440 186,398 178,398 160,418 145,425 130,445 126,460 120,450 110,464 104,460 105,442 112,420 125,400 135,378 148,345 158,318 170,295 180,275 170,262 182,246 198,228 206,222 206,190 204,178 220,180 240,160 255,115 265,90 278,60 275,45 282,38"],
      ["w", "268,108 280,96 292,90 296,76 310,78 312,70 324,72 326,84 334,92 345,98 355,105 354,135 345,128 320,118 276,118"],
      ["k", "282,38 286,26 302,26 318,30 316,38 324,46 308,52 308,58 294,64 286,52 275,45"],
      ["k", "234,110 250,112 260,124 248,130 264,142 278,136 278,158 272,168 282,178 290,188 275,200 300,210 345,205 342,215 340,232 345,250 330,250 334,275 322,282 328,302 314,306 320,312 324,330 304,334 298,350 290,362 284,380 278,390 248,390 244,376 238,372 232,376 228,368 214,364 210,354 195,350 182,340 176,348 160,342 152,334 170,330 162,314 176,320 184,308 182,290 188,276 175,275 180,262 190,256 178,240 192,240 206,248 210,240 196,225 218,222 220,196 232,182 246,184 240,176 220,176 222,155 240,148 226,134 238,124"],
      ["k", "345,150 362,152 356,162 370,166 358,174 356,190 345,192 328,180 324,162 336,160"],
      ["k", "308,168 318,166 316,178 308,176"], ["k", "152,360 162,362 160,372 152,370"], ["k", "374,108 390,106 384,116 376,114"],
      ["g", "203,464 220,464 222,476 234,478 228,488 206,482"], ["g", "188,486 198,490 196,500 186,500"],
      ["g", "202,500 220,502 212,520 196,510"],
    ],
  },
  {
    at: [500, 540],
    shapes: [
      ["g", "415,115 430,122 440,130 460,136 490,130 520,120 530,118 524,100 540,100 545,108 556,92 564,80 580,82 575,105 558,130 530,180 500,225 460,285 420,335 398,372 382,398 378,412 366,422 358,400 346,392 348,378 356,374 370,378 380,368 362,362 350,345 340,340 335,325 310,320 306,334 298,346 290,334 278,342 272,330 262,334 258,326 240,320 230,314 236,308 258,302 264,270 258,258 270,246 288,240 292,208 310,206 325,190 346,192 345,178 352,162 372,164 378,152 392,140 378,148 396,120"],
      ["w", "384,148 398,144 400,156 408,156 406,170 398,170 394,160 384,156"], ["w", "520,116 536,112 540,122 526,124"],
      ["k", "324,184 332,184 334,190 342,188 344,205 354,225 354,234 370,236 372,242 382,236 382,226 388,220 394,222 392,238 386,242 384,254 370,252 368,246 336,244 334,270 326,290 316,282 302,292 282,298 276,290 272,300 262,302 258,288 264,286 264,272 272,262 270,254 292,246 290,216 308,214 308,198 328,198"],
      ["k", "386,130 392,116 400,106 416,106 416,116 404,130 396,132"], ["k", "372,132 384,132 380,146 374,142"],
      ["k", "402,80 422,84 436,82 434,94 424,92 420,98 410,90"], ["g", "422,70 438,70 434,80 428,78"],
      ["k", "446,14 466,16 456,28 454,40 444,38 446,30 454,26"],
      ["g", "224,334 244,342 240,352 230,356 222,344"], ["g", "215,356 226,366 216,376 206,368"], ["g", "198,380 206,384 198,392"],
      ["g", "184,406 194,412 214,414 212,430 222,442 208,446 206,454 200,458 206,466 190,468 180,460 170,462 160,454 164,446 162,436 176,428 174,418"],
      ["g", "148,480 158,490 178,490 188,498 188,508 196,522 186,518 174,512 180,526 186,546 200,556 206,574 228,580 240,576 236,564 262,558 274,560 280,572 274,592 258,608 240,608 226,592 204,590 196,576 182,574 176,562 172,572 170,560 160,550 148,560 132,570 146,576 130,578 118,590 112,592 114,600 106,620 100,604 88,620 78,622 92,600 108,566 122,536 134,510 144,498"],
      ["g", "338,432 348,438 348,450 356,438 368,440 378,454 364,450 350,452 346,470 334,476 322,474 308,462 310,450 326,452 324,440 336,440"],
      ["k", "338,458 346,462 344,478 334,478"], ["g", "308,498 324,500 320,516 310,514"], ["k", "316,494 326,496 328,508 318,510"],
      ["g", "324,486 342,490 334,496 326,502"], ["g", "268,532 282,534 276,542"], ["g", "280,544 290,548 286,556"],
      ["k", "290,546 300,556 294,562 288,558"], ["k", "268,580 274,582 276,590 288,592 276,600 270,614 254,618 260,604 264,598"],
      ["g", "236,630 250,634 256,624 260,628 252,644 242,650 244,638"], ["g", "208,656 224,652 226,642 238,644 244,664 220,662"],
      ["k", "236,644 240,654 248,660 244,664 230,664"],
    ],
  },
  {
    at: [400, 740],
    shapes: [
      ["g", "354,52 370,52 385,64 400,68 404,76 414,66 422,76 418,96 404,96 412,102 428,94 430,84 440,80 456,66 450,46 458,56 468,48 470,62 480,60 492,78 502,80 512,94 500,120 488,140 476,160 466,180 476,192 456,194 454,208 442,212 446,228 430,232 430,242 412,244 408,260 388,274 386,290 402,294 384,300 382,320 368,326 366,346 346,346 354,364 334,370 338,386 326,380 308,390 308,404 290,410 288,424 300,432 284,434 270,440 200,530 142,602 130,594 24,512 60,460 95,418 106,422 110,412 100,406 160,326 228,234 268,176 266,154 274,160 274,172 288,150 284,136 292,138 308,136 318,116 328,104 330,82 346,78 340,70 352,68"],
      ["k", "350,52 368,52 366,60 360,72 350,68"],
      ["k", "306,136 312,146 320,150 318,164 330,174 344,166 350,170 352,184 350,196 340,200 346,208 356,214 356,222 344,230 340,240 328,240 320,246 310,250 304,256 308,268 304,276 280,280 276,290 274,300 276,316 262,320 270,330 276,338 262,336 256,326 244,332 238,346 222,342 216,332 230,318 246,324 244,310 256,296 262,282 254,272 264,264 266,240 258,236 248,236 252,246 238,244 228,232 240,208 256,190 270,180 276,170 292,160 296,144"],
      ["k", "424,162 432,164 432,182 420,186 418,222 406,230 396,230 396,260 386,270 386,290 368,296 368,302 340,312 334,322 318,320 322,304 330,296 322,284 320,270 320,250 328,244 326,268 340,276 346,258 344,240 350,230 370,220 384,208 386,196 398,196 398,180 414,174"],
      ["g", "330,244 342,240 344,258 336,268 328,264"],
      ["k", "348,152 364,154 362,168 348,164"],
      ["k", "215,276 228,284 222,292 232,300 216,306 200,320 196,328 178,332 174,324 190,318 204,308 192,302 194,294 208,290"],
      ["k", "312,322 328,324 326,344 316,366 302,366 290,352 304,342 302,334"],
      ["k", "268,356 284,366 298,374 298,380 280,372"],
      ["k", "248,420 260,422 272,440 238,484 200,532 198,514 190,506 192,490 198,484 196,474 204,462 222,460 226,444 232,454 246,450 250,438 238,428"],
      ["k", "32,506 48,508 50,518 42,516"], ["k", "438,182 446,186 450,200 442,194"],
    ],
  },
];
const classColor = { g: "#808080", k: "#000", w: "#fff" };

export default function App() {
  return (
    <Window>
      <Global />
      <TitleBar>
        <Glyph viewBox="0 0 24 24" $size={21}>
          <path d="M10.500 1a10 10 0 1 0 5 18.500l-3-3.500A5.800 5.800 0 1 1 16.200 12l4 3A10 10 0 0 0 10.500 1z" fill="#76aa2d" />
          <path d="M12 11.500h5l5 7v3.500h-4.500l-5.500-6.500z" fill="#5b9632" />
          <path d="M9 8.500h4l2 2.500-1 2-2 1.500-3-2.500z" fill="#f08a3c" />
        </Glyph>
        *Untitled Project — QGIS
      </TitleBar>
      <MenuBar>
        {menus.map(([a, key, b, w]) => (
          <MenuItem key={a + key + b} $w={w}>{a}<u>{key}</u>{b}</MenuItem>
        ))}
      </MenuBar>
      {toolbars.map((row, i) => (
        <Toolbar key={i} $h={i === 3 ? 38 : 39}>{row.split(" ").map(renderTool)}</Toolbar>
      ))}
      <Workspace>
        <SideBar>
          <SideGrip />
          <SideList>
            {sideTools.map(([name, menu], i) => (
              <SideItem key={i}><Icon name={name} />{menu && <Caret />}</SideItem>
            ))}
          </SideList>
        </SideBar>
        <LayersDock>
          <DockTitle>
            <span>Layers</span>
            <DockButton viewBox="0 0 11 11" $size={11}>
              <rect x=".5" y=".5" width="10" height="10" rx="1.500" fill="none" stroke="#555" />
              <path d="M4.500 2.500h4v4h-4zM2.500 4.500h4v4h-4z" fill="#f0f0f0" stroke="#555" />
            </DockButton>
            <DockButton viewBox="0 0 11 11" $size={11}>
              <rect x=".5" y=".5" width="10" height="10" rx="1.500" fill="none" stroke="#555" />
              <path d="M2.800 2.800l5.400 5.400M8.200 2.800L2.800 8.200" stroke="#444" strokeWidth="1.800" />
            </DockButton>
          </DockTitle>
          <DockTools>
            <DockTool><Icon name="paint" size={16} /></DockTool>
            <DockTool><Icon name="addGroup" size={16} /></DockTool>
            <DockTool><Icon name="visibility" size={18} /></DockTool>
            <DockTool><Icon name="filter" size={17} /></DockTool>
            <DockTool $w={20}><Icon name="expression" size={16} dim /></DockTool>
            <Caret $dim />
            <DockTool $w={7} />
            <DockTool><Icon name="expand" size={15} /></DockTool>
            <DockTool><Icon name="collapse" size={15} /></DockTool>
            <DockTool><Icon name="removeLayer" size={15} /></DockTool>
          </DockTools>
          <LayerTree>
            <LayerRow>
              <Caret />
              <CheckBox>
                <Glyph viewBox="0 0 15 15" $size={15}>
                  <path d="M3.500 7.500l3 4.500L12 2.500" fill="none" stroke="#000" strokeWidth="2" />
                </Glyph>
              </CheckBox>
              <Glyph viewBox="0 0 17 17" $size={17}>
                <rect width="17" height="17" fill="#e4edf7" />
                <path d="M0 0h5v5H0zM11 0h6v5h-6zM5 5h6v6H5zM0 11h5v6H0z" fill="#2e4058" />
                <path d="M5 0h6v5H5zM11 5h6v6h-6zM5 11h6v6H5z" fill="#9fbce0" />
                <path d="M0 5h5v6H0z" fill="#7fa3d0" />
              </Glyph>
              <LayerName>evaluated_habitat_3bi</LayerName>
            </LayerRow>
            <BandLabel>Band 1 (Gray)</BandLabel>
            <Legend>
              <Ramp />
              <RampLabels><span>3</span><span>1</span></RampLabels>
            </Legend>
          </LayerTree>
        </LayersDock>
        <Splitter />
        <CanvasPane>
          <MessageBar>
            <Glyph viewBox="0 0 22 22" $size={22}>
              <path d="M4 2.500h14c2 0 3 1 3 2.500v7c0 2-1 3-3 3h-6c-1 3-3 4.500-5.500 5 1-1.500 1.500-3 1-5H4c-2 0-3-1-3-3V5c0-1.500 1-2.500 3-2.500z" fill="#fff" stroke="#999" strokeWidth="1.100" />
            </Glyph>
            Multiple plugin updates are available
          </MessageBar>
          <MapCanvas viewBox="295 245.4 914 725" shapeRendering="crispEdges">
            {tiles.map(({ at, shapes }) => (
              <g key={at.join()} transform={`translate(${at[0]} ${at[1]}) scale(0.33333)`}>
                {shapes.map(([c, pts], i) => <polygon key={i} points={pts} fill={classColor[c]} />)}
              </g>
            ))}
          </MapCanvas>
        </CanvasPane>
      </Workspace>
    </Window>
  );
}
